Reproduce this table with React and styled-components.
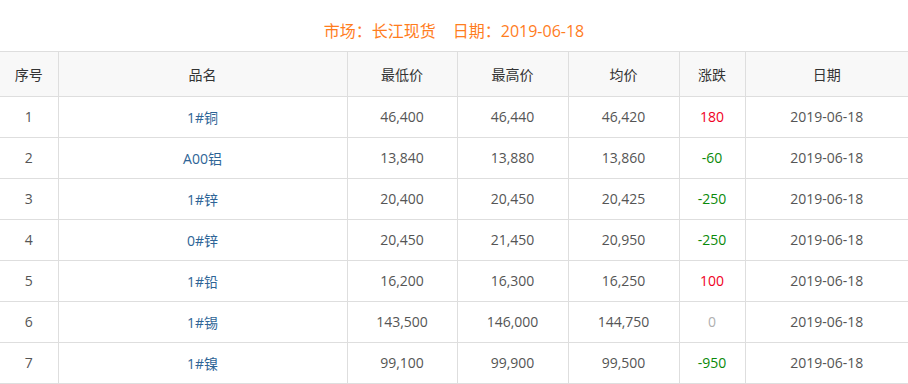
import React from "react";
import styled, { createGlobalStyle } from "styled-components";

const rows = [
  { id: 1, name: "1#铜", low: "46,400", high: "46,440", avg: "46,420", change: 180 },
  { id: 2, name: "A00铝", low: "13,840", high: "13,880", avg: "13,860", change: -60 },
  { id: 3, name: "1#锌", low: "20,400", high: "20,450", avg: "20,425", change: -250 },
  { id: 4, name: "0#锌", low: "20,450", high: "21,450", avg: "20,950", change: -250 },
  { id: 5, name: "1#铅", low: "16,200", high: "16,300", avg: "16,250", change: 100 },
  { id: 6, name: "1#锡", low: "143,500", high: "146,000", avg: "144,750", change: 0 },
  { id: 7, name: "1#镍", low: "99,100", high: "99,900", avg: "99,500", change: -950 },
];

const columns = [
  { label: "序号", width: 58 },
  { label: "品名", width: 289 },
  { label: "最低价", width: 110 },
  { label: "最高价", width: 111 },
  { label: "均价", width: 111 },
  { label: "涨跌", width: 66 },
  { label: "日期", width: 163 },
];

const GlobalStyle = createGlobalStyle`
  body {
    margin: 0;
    background: #fff;
    font-family: "Open Sans", "Noto Sans CJK SC", sans-serif;
  }
`;

const Page = styled.div`
  width: 908px;
`;

const Title = styled.div`
  height: 51px;
  padding-top: 20px;
  box-sizing: border-box;
  text-align: center;
  font-size: 16px;
  line-height: 22px;
  color: #ff7d1e;
  .gap {
    margin-left: 17px;
  }
`;

const Table = styled.table`
  width: 908px;
  border-collapse: collapse;
  table-layout: fixed;
  font-size: 14px;

  th,
  td {
    border: 1px solid #dedede;
    text-align: center;
    padding: 0 0 1px;
  }
  th:first-child,
  td:first-child {
    border-left: none;
  }
  th:last-child,
  td:last-child {
    border-right: none;
  }
`;

const Head = styled.th`
  height: 43px;
  background: #f8f8f8;
  font-weight: normal;
  color: #333;
`;

const Cell = styled.td`
  height: 39px;
  color: #555;
`;

const Name = styled(Cell)`
  color: #2e6496;
`;

const Change = styled(Cell)`
  color: ${(p) => (p.$v > 0 ? "#f00024" : p.$v < 0 ? "#0a8a0a" : "#b0b0b0")};
`;

export default function App() {
  return (
    <Page>
      <GlobalStyle />
      <Title>
        市场：长江现货<span className="gap">日期：2019-06-18</span>
      </Title>
      <Table>
        <colgroup>
          {columns.map((c) => (
            <col key={c.label} style={{ width: c.width }} />
          ))}
        </colgroup>
        <thead>
          <tr>
            {columns.map((c) => (
              <Head key={c.label}>{c.label}</Head>
            ))}
          </tr>
        </thead>
        <tbody>
          {rows.map((r) => (
            <tr key={r.id}>
              <Cell>{r.id}</Cell>
              <Name>{r.name}</Name>
              <Cell>{r.low}</Cell>
              <Cell>{r.high}</Cell>
              <Cell>{r.avg}</Cell>
              <Change $v={r.change}>{r.change}</Change>
              <Cell>2019-06-18</Cell>
            </tr>
          ))}
        </tbody>
      </Table>
    </Page>
  );
}
